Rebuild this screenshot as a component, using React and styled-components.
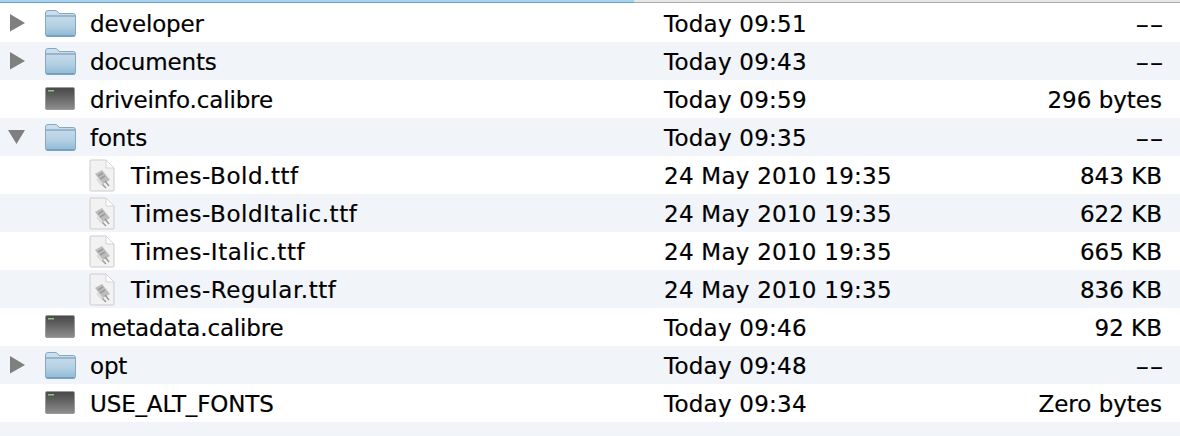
import React from 'react';
import styled, { createGlobalStyle } from 'styled-components';

const GlobalStyle = createGlobalStyle`
  html, body {
    margin: 0;
    padding: 0;
    background: #ffffff;
  }
`;

const Window = styled.div`
  width: 1180px;
  height: 436px;
  overflow: hidden;
  display: flex;
  flex-direction: column;
  background: #f1f5fa;
  font-family: "DejaVu Sans", "Liberation Sans", sans-serif;
  font-size: 23px;
  line-height: 34px;
  color: #000000;
  -webkit-text-stroke: 0.2px #000000;
`;

const HeaderEdge = styled.div`
  height: 4px;
  flex: none;
  display: flex;
  background: #ffffff;
`;

const HeaderCell = styled.div`
  height: 3px;
  box-sizing: border-box;
  border-bottom: 1px solid ${(p) => (p.$active ? '#6f9fc0' : '#a8a8a8')};
  background: ${(p) => (p.$active ? '#a6d3f2' : '#e6e6e6')};
  width: ${(p) => (p.$active ? '634px' : 'auto')};
  flex: ${(p) => (p.$active ? 'none' : '1')};
`;

const Row = styled.div`
  height: 38px;
  flex: none;
  display: grid;
  grid-template-columns: 664px 1fr auto;
  align-items: center;
  padding-right: 18px;
  background: ${(p) => (p.$alt ? '#f1f5fa' : '#ffffff')};
`;

const NameCell = styled.div`
  display: flex;
  align-items: center;
  padding-left: ${(p) => (p.$child ? '89px' : '8px')};
`;

const Toggle = styled.div`
  width: 36px;
  height: 20px;
  flex: none;
  display: flex;
  align-items: center;
`;

const IconBox = styled.div`
  width: ${(p) => (p.$child ? '42px' : '46px')};
  height: 32px;
  flex: none;
  display: flex;
  align-items: center;
`;

const Name = styled.span`
  padding-top: 2px;
  letter-spacing: ${(p) => (p.$child ? '0.55px' : '-0.15px')};
  white-space: nowrap;
`;

const DateCell = styled.div`
  padding-top: 2px;
  letter-spacing: 0.25px;
  white-space: nowrap;
`;

const SizeCell = styled.div`
  padding-top: 2px;
  white-space: nowrap;
  text-align: right;
`;

/* the empty-size dashes are much wider in the original face */
const Dashes = styled.span`
  display: inline-block;
  transform: translateX(2px) scaleX(1.7);
  transform-origin: right center;
`;

function Arrow({ open }) {
  return (
    <svg width="18" height="18" viewBox="0 0 18 18">
      {open
        ? <path d="M0 2 H17 L8.5 16 Z" fill="#7f7f7f" />
        : <path d="M2 0 L17 9 L2 17.5 Z" fill="#7f7f7f" />}
    </svg>
  );
}

function FolderIcon() {
  return (
    <svg width="33" height="30" viewBox="0 0 33 30">
      <defs>
        <linearGradient id="folderFill" x1="0" y1="0" x2="0" y2="1">
          <stop offset="0" stopColor="#cfe0ec" />
          <stop offset="0.6" stopColor="#b3d0e3" />
          <stop offset="1" stopColor="#8fb8d4" />
        </linearGradient>
      </defs>
      <path d="M1.500 5 Q1.500 2.500 4 2.500 H11 Q13 2.500 14 4 L15 5.500 H29.500 Q31.500 5.500 31.500 8 V26 Q31.500 28.500 29.500 28.500 H3.500 Q1.500 28.500 1.500 26 Z" fill="url(#folderFill)" stroke="#86a9c2" strokeWidth="1" />
      <path d="M2 8 H31" stroke="#86aac4" strokeWidth="1.500" />
      <path d="M2.500 27.800 H30.500" stroke="#6b99b9" strokeWidth="1.200" />
    </svg>
  );
}

function ExecIcon() {
  return (
    <svg width="32" height="24" viewBox="0 0 32 24">
      <defs>
        <linearGradient id="execFill" x1="0" y1="0" x2="0" y2="1">
          <stop offset="0" stopColor="#484848" />
          <stop offset="0.3" stopColor="#5a5a5a" />
          <stop offset="1" stopColor="#8e8e8e" />
        </linearGradient>
      </defs>
      <rect x="1.500" y="0.500" width="29" height="22" rx="1.500" fill="url(#execFill)" stroke="#9a9a9a" />
      <rect x="4" y="3" width="6" height="1.500" fill="#8fc08f" />
    </svg>
  );
}

function FontFileIcon() {
  return (
    <svg width="26" height="33" viewBox="0 0 26 33">
      <path d="M1 2 Q1 1 2 1 H17 L25 9 V31 Q25 32 24 32 H2 Q1 32 1 31 Z" fill="#f2f2f2" stroke="#cccccc" />
      <path d="M17 1 V9 H25 Z" fill="#ffffff" stroke="#d4d4d4" />
      <path d="M6 15 L13 11 L21 21 L14 25 Z" fill="#bdbdbd" />
      <path d="M9 17 L14 14 M11 20 L16 17 M16 22 L20 27 M13 25 L17 29" stroke="#9a9a9a" strokeWidth="1.500" />
      <path d="M8 20 L13 26" stroke="#dcdcdc" strokeWidth="2" />
    </svg>
  );
}

const rows = [
  { name: 'developer', date: 'Today 09:51', size: '--', kind: 'folder' },
  { name: 'documents', date: 'Today 09:43', size: '--', kind: 'folder' },
  { name: 'driveinfo.calibre', date: 'Today 09:59', size: '296 bytes', kind: 'exec' },
  { name: 'fonts', date: 'Today 09:35', size: '--', kind: 'folder', open: true },
  { name: 'Times-Bold.ttf', date: '24 May 2010 19:35', size: '843 KB', kind: 'font' },
  { name: 'Times-BoldItalic.ttf', date: '24 May 2010 19:35', size: '622 KB', kind: 'font' },
  { name: 'Times-Italic.ttf', date: '24 May 2010 19:35', size: '665 KB', kind: 'font' },
  { name: 'Times-Regular.ttf', date: '24 May 2010 19:35', size: '836 KB', kind: 'font' },
  { name: 'metadata.calibre', date: 'Today 09:46', size: '92 KB', kind: 'exec' },
  { name: 'opt', date: 'Today 09:48', size: '--', kind: 'folder' },
  { name: 'USE_ALT_FONTS', date: 'Today 09:34', size: 'Zero bytes', kind: 'exec' },
];

export default function App() {
  return (
    <>
      <GlobalStyle />
      <Window>
        <HeaderEdge>
          <HeaderCell $active />
          <HeaderCell />
        </HeaderEdge>
        {rows.map((r, i) => (
          <Row key={r.name} $alt={i % 2 === 1}>
            <NameCell $child={r.kind === 'font'}>
              {r.kind !== 'font' && (
                <Toggle>{r.kind === 'folder' && <Arrow open={r.open} />}</Toggle>
              )}
              <IconBox $child={r.kind === 'font'}>
                {r.kind === 'folder' && <FolderIcon />}
                {r.kind === 'exec' && <ExecIcon />}
                {r.kind === 'font' && <FontFileIcon />}
              </IconBox>
              <Name $child={r.kind === 'font'}>{r.name}</Name>
            </NameCell>
            <DateCell>{r.date}</DateCell>
            <SizeCell>{r.size === '--' ? <Dashes>--</Dashes> : r.size}</SizeCell>
          </Row>
        ))}
      </Window>
    </>
  );
}
